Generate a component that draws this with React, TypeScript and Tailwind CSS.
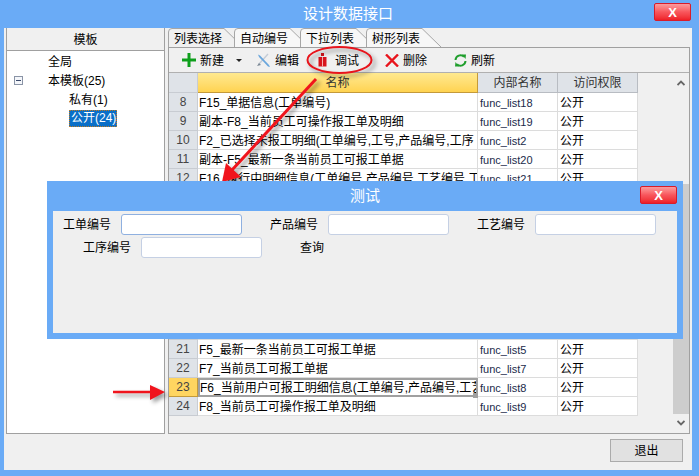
const FONT = "font-['Liberation_Sans','Noto_Sans_CJK_SC',sans-serif]"

type Row = { no: number; name?: string; key?: string; access?: string }

const rows: Row[] = [
  { no: 8, name: "F15_单据信息(工单编号)", key: "func_list18", access: "公开" },
  { no: 9, name: "副本-F8_当前员工可操作报工单及明细", key: "func_list19", access: "公开" },
  { no: 10, name: "F2_已选择未报工明细(工单编号,工号,产品编号,工序", key: "func_list2", access: "公开" },
  { no: 11, name: "副本-F5_最新一条当前员工可报工单据", key: "func_list20", access: "公开" },
  { no: 12, name: "F16_执行中明细信息(工单编号,产品编号,工艺编号,工", key: "func_list21", access: "公开" },
  { no: 13 },
  { no: 14 },
  { no: 15 },
  { no: 16 },
  { no: 17 },
  { no: 18 },
  { no: 19 },
  { no: 20 },
  { no: 21, name: "F5_最新一条当前员工可报工单据", key: "func_list5", access: "公开" },
  { no: 22, name: "F7_当前员工可报工单据", key: "func_list7", access: "公开" },
  { no: 23, name: "F6_当前用户可报工明细信息(工单编号,产品编号,工艺", key: "func_list8", access: "公开" },
  { no: 24, name: "F8_当前员工可操作报工单及明细", key: "func_list9", access: "公开" },
]

function CloseButton() {
  return (
    <div className="flex h-[18px] w-[37px] items-center justify-center rounded-[2px] border border-[#d81c2a] bg-gradient-to-b from-[#fb9a9e] via-[#f8555c] to-[#ee1c26] text-[13px] leading-none font-bold text-white">
      X
    </div>
  )
}

function Tab({ label, active }: { label: string; active?: boolean }) {
  return (
    <div className="relative h-[19px] w-[66px] shrink-0 text-[12px] leading-[19px]">
      <svg className="absolute top-0 left-0" width="82" height="19" viewBox="0 0 82 19">
        <path
          d="M0.5 19V4Q0.5 0.5 4 0.5H56L75 19"
          fill={active ? "#f0f0f0" : "#f7f7f7"}
          stroke="#a6a6a6"
        />
      </svg>
      <span className="absolute top-[2px] left-[6px] text-black">{label}</span>
    </div>
  )
}

function ToolbarIcon({ kind }: { kind: "plus" | "wrench" | "debug" | "x" | "refresh" }) {
  if (kind === "plus") {
    return (
      <svg width="14" height="14" viewBox="0 0 14 14">
        <path d="M5.5 0h3v5.5H14v3H8.5V14h-3V8.5H0v-3h5.5z" fill="#0e9f1c" />
      </svg>
    )
  }
  if (kind === "wrench") {
    return (
      <svg width="15" height="15" viewBox="0 0 15 15">
        <path d="M12 1L3 11" stroke="#c4ccd6" strokeWidth="1.4" />
        <path d="M2 1.5l2 1 9 9.5 1 2-2-.5L3 4z" fill="#6aa6dc" />
        <path d="M1 13l2-3 2 2z" fill="#7a8794" />
      </svg>
    )
  }
  if (kind === "debug") {
    return (
      <svg width="9" height="14" viewBox="0 0 9 14">
        <path d="M3 0h3v3H3z" fill="#d8141c" />
        <path d="M0.5 4h8v9.5h-8z" fill="#d8141c" />
        <path d="M4 4h1v9.5H4z" fill="#f4b0b0" />
      </svg>
    )
  }
  if (kind === "x") {
    return (
      <svg width="14" height="13" viewBox="0 0 14 13">
        <path d="M1 0.5l12 12M13 0.5l-12 12" stroke="#e8141c" strokeWidth="2.4" />
      </svg>
    )
  }
  return (
    <svg width="13" height="13" viewBox="0 0 13 13" fill="none">
      <path d="M1.5 6A5 5 0 0 1 10 2.8" stroke="#1f9e2c" strokeWidth="2" />
      <path d="M8 0.5L12 0.5L11.5 5z" fill="#1f9e2c" />
      <path d="M11.5 7A5 5 0 0 1 3 10.2" stroke="#1f9e2c" strokeWidth="2" />
      <path d="M5 12.5L1 12.5L1.5 8z" fill="#1f9e2c" />
    </svg>
  )
}

function Sidebar() {
  return (
    <div className="flex h-[406px] w-[159px] shrink-0 flex-col border border-t-0 border-[#a0a0a0] bg-white text-[12px] text-black">
      <div className="flex h-[23px] items-center justify-center border-b border-[#a0a0a0] bg-[#f0f0f0] pt-[1px]">模板</div>
      <div className="relative flex flex-col pt-[2px] pl-[41px] leading-[19px]">
        <div className="h-[19px]">全局</div>
        <div className="h-[19px]">本模板(25)</div>
        <div className="h-[19px] pl-[21px]">私有(1)</div>
        <div className="ml-[21px] h-[17px] w-[48px] border border-dotted border-[#c27a20] bg-[#0a6fc8] pl-[1px] leading-[15px] whitespace-nowrap text-white">
          公开(24)
        </div>
        <div className="absolute top-[25px] left-[7px] flex h-[9px] w-[9px] items-center justify-center border border-[#8a94a6] bg-[#f4f6fa]">
          <div className="h-[1px] w-[5px] bg-[#3a4a6a]" />
        </div>
      </div>
    </div>
  )
}

function Grid() {
  return (
    <div className="flex min-h-0 flex-1">
      <div className="flex min-w-0 flex-1 flex-col overflow-hidden text-[12px]">
        <div className="flex h-[20px] shrink-0 text-[#333]">
          <div className="w-[29px] border-r border-b border-[#c8ccd2] bg-[#dfe3e8]" />
          <div className="flex w-[280px] items-center justify-center border-r border-b border-[#c49a3a] bg-gradient-to-b from-[#ffe98f] to-[#ffd350] pt-[1px]">
            名称
          </div>
          <div className="flex w-[80px] items-center justify-center border-r border-b border-[#b8bcc2] bg-[#dfe3e8] pt-[1px]">
            内部名称
          </div>
          <div className="flex w-[80px] items-center justify-center border-r border-b border-[#b8bcc2] bg-[#dfe3e8] pt-[1px]">
            访问权限
          </div>
        </div>
        {rows.map((row) => {
          const selected = row.no === 23
          return (
            <div key={row.no} className="flex h-[19px] shrink-0">
              <div
                className={
                  selected
                    ? "flex w-[29px] items-center justify-center border-r border-b border-[#c49a3a] bg-[#ffd560] text-[#444]"
                    : "flex w-[29px] items-center justify-center border-r border-b border-[#c8ccd2] bg-[#dfe3e8] text-[#444]"
                }
              >
                {row.no}
              </div>
              {selected ? (
                <div className="relative w-[280px] border-2 border-[#a0a0a0] bg-white leading-[17px] text-black">
                  <div className="h-full overflow-hidden whitespace-nowrap">{row.name}</div>
                  <div className="absolute right-[-2px] bottom-[-3px] h-[5px] w-[5px] bg-[#a0a0a0]" />
                </div>
              ) : (
                <div className="w-[280px] overflow-hidden border-r border-b border-[#dcdcdc] bg-white pl-[1px] leading-[20px] whitespace-nowrap text-black">
                  {row.name}
                </div>
              )}
              <div className="w-[80px] overflow-hidden border-r border-b border-[#dcdcdc] bg-white pl-[2px] text-[11px] leading-[20px] text-[#1a2a4a]">
                {row.key}
              </div>
              <div className="w-[80px] border-r border-b border-[#dcdcdc] bg-white pl-[2px] leading-[20px] text-black">
                {row.access}
              </div>
            </div>
          )
        })}
      </div>
      <div className="flex w-[16px] shrink-0 flex-col items-center bg-[#f0f0f0]">
        <svg className="mt-[7px]" width="8" height="6" viewBox="0 0 8 6" fill="none">
          <path d="M0.5 5L4 1.5L7.5 5" stroke="#666" strokeWidth="1.8" />
        </svg>
        <div className="mt-[98px] h-[230px] w-full bg-[#cdcdcd]" />
        <svg className="mt-[6px]" width="8" height="6" viewBox="0 0 8 6" fill="none">
          <path d="M0.5 1L4 4.5L7.5 1" stroke="#666" strokeWidth="1.8" />
        </svg>
      </div>
    </div>
  )
}

function Toolbar() {
  return (
    <div className="flex h-[25px] shrink-0 items-center border-b border-[#b0b0b0] pl-[13px] text-[12px] text-black">
      <ToolbarIcon kind="plus" />
      <span className="ml-[4px] pt-[2px]">新建</span>
      <svg className="ml-[12px]" width="6" height="3" viewBox="0 0 6 3">
        <path d="M0 0h6L3 3z" fill="#222" />
      </svg>
      <span className="ml-[14px] flex">
        <ToolbarIcon kind="wrench" />
      </span>
      <span className="ml-[4px] pt-[2px]">编辑</span>
      <span className="ml-[19px] flex">
        <ToolbarIcon kind="debug" />
      </span>
      <span className="ml-[8px] pt-[2px]">调试</span>
      <span className="ml-[26px] flex">
        <ToolbarIcon kind="x" />
      </span>
      <span className="ml-[4px] pt-[2px]">删除</span>
      <span className="ml-[27px] flex">
        <ToolbarIcon kind="refresh" />
      </span>
      <span className="ml-[4px] pt-[2px]">刷新</span>
    </div>
  )
}

function Field({ label, className }: { label: string; className: string }) {
  return (
    <div className={className}>
      <span className="w-[48px] shrink-0 pt-[1px] whitespace-nowrap">{label}</span>
    </div>
  )
}

function TestDialog() {
  return (
    <div className="absolute top-[181px] left-[47px] flex h-[158px] w-[636px] flex-col bg-[#6aabf6] px-[6px] pb-[6px]">
      <div className="relative flex h-[30px] shrink-0 items-center justify-center text-[15px] text-white">
        测试
        <div className="absolute top-[5px] right-0">
          <CloseButton />
        </div>
      </div>
      <div className="flex flex-1 flex-col gap-[2px] bg-[#efefef] pt-[3px] text-[12px] text-black">
        <div className="flex h-[21px] items-center">
          <Field label="工单编号" className="ml-[10px] flex" />
          <div className="ml-[10px] h-[21px] w-[121px] rounded-[3px] border border-[#8fb0e0] bg-white" />
          <Field label="产品编号" className="ml-[28px] flex" />
          <div className="ml-[10px] h-[21px] w-[121px] rounded-[3px] border border-[#c5d0e4] bg-white" />
          <Field label="工艺编号" className="ml-[28px] flex" />
          <div className="ml-[10px] h-[21px] w-[121px] rounded-[3px] border border-[#c5d0e4] bg-white" />
        </div>
        <div className="flex h-[21px] items-center">
          <Field label="工序编号" className="ml-[30px] flex" />
          <div className="ml-[10px] h-[21px] w-[121px] rounded-[3px] border border-[#c5d0e4] bg-white" />
          <span className="ml-[38px] pt-[1px]">查询</span>
        </div>
      </div>
    </div>
  )
}

function Annotations() {
  return (
    <svg className="absolute top-0 left-0 drop-shadow-[3px_3px_2px_rgba(0,0,0,0.4)]" width="699" height="476" viewBox="0 0 699 476" fill="none">
      <ellipse cx="339.5" cy="60" rx="32" ry="13" stroke="#e8141c" strokeWidth="2" />
      <path d="M316 79L232 170" stroke="#f0141c" strokeWidth="3" />
      <path d="M222 182L226 163L241 177z" fill="#f0141c" />
      <path d="M113 392H152" stroke="#f0141c" strokeWidth="2.5" />
      <path d="M165 392L150 385V400z" fill="#f0141c" />
    </svg>
  )
}

export default function App() {
  return (
    <div className={`relative flex h-[476px] w-[699px] flex-col overflow-hidden bg-[#6aabf6] ${FONT}`}>
      <div className="relative flex h-[28px] shrink-0 items-center justify-center pr-[3px] text-[15px] text-white">
        设计数据接口
        <div className="absolute top-[3px] right-[8px]">
          <CloseButton />
        </div>
      </div>
      <div className="mr-[7px] mb-[6px] ml-[4px] flex flex-1 flex-col bg-[#f0f0f0]">
        <div className="flex h-[406px] shrink-0 pl-[2px]">
          <Sidebar />
          <div className="ml-[3px] flex min-w-0 flex-1 flex-col pr-[2px]">
            <div className="flex h-[19px] shrink-0">
              <Tab label="列表选择" active />
              <Tab label="自动编号" />
              <Tab label="下拉列表" />
              <Tab label="树形列表" />
            </div>
            <div className="flex min-h-0 flex-1 flex-col border border-[#a0a0a0]">
              <Toolbar />
              <Grid />
            </div>
          </div>
        </div>
        <div className="flex flex-1 items-start justify-end pt-[5px] pr-[9px]">
          <div className="flex h-[23px] w-[73px] items-center justify-center border border-[#ababab] bg-[#e1e1e1] text-[12px] text-black">
            退出
          </div>
        </div>
      </div>
      <Annotations />
      <TestDialog />
    </div>
  )
}
